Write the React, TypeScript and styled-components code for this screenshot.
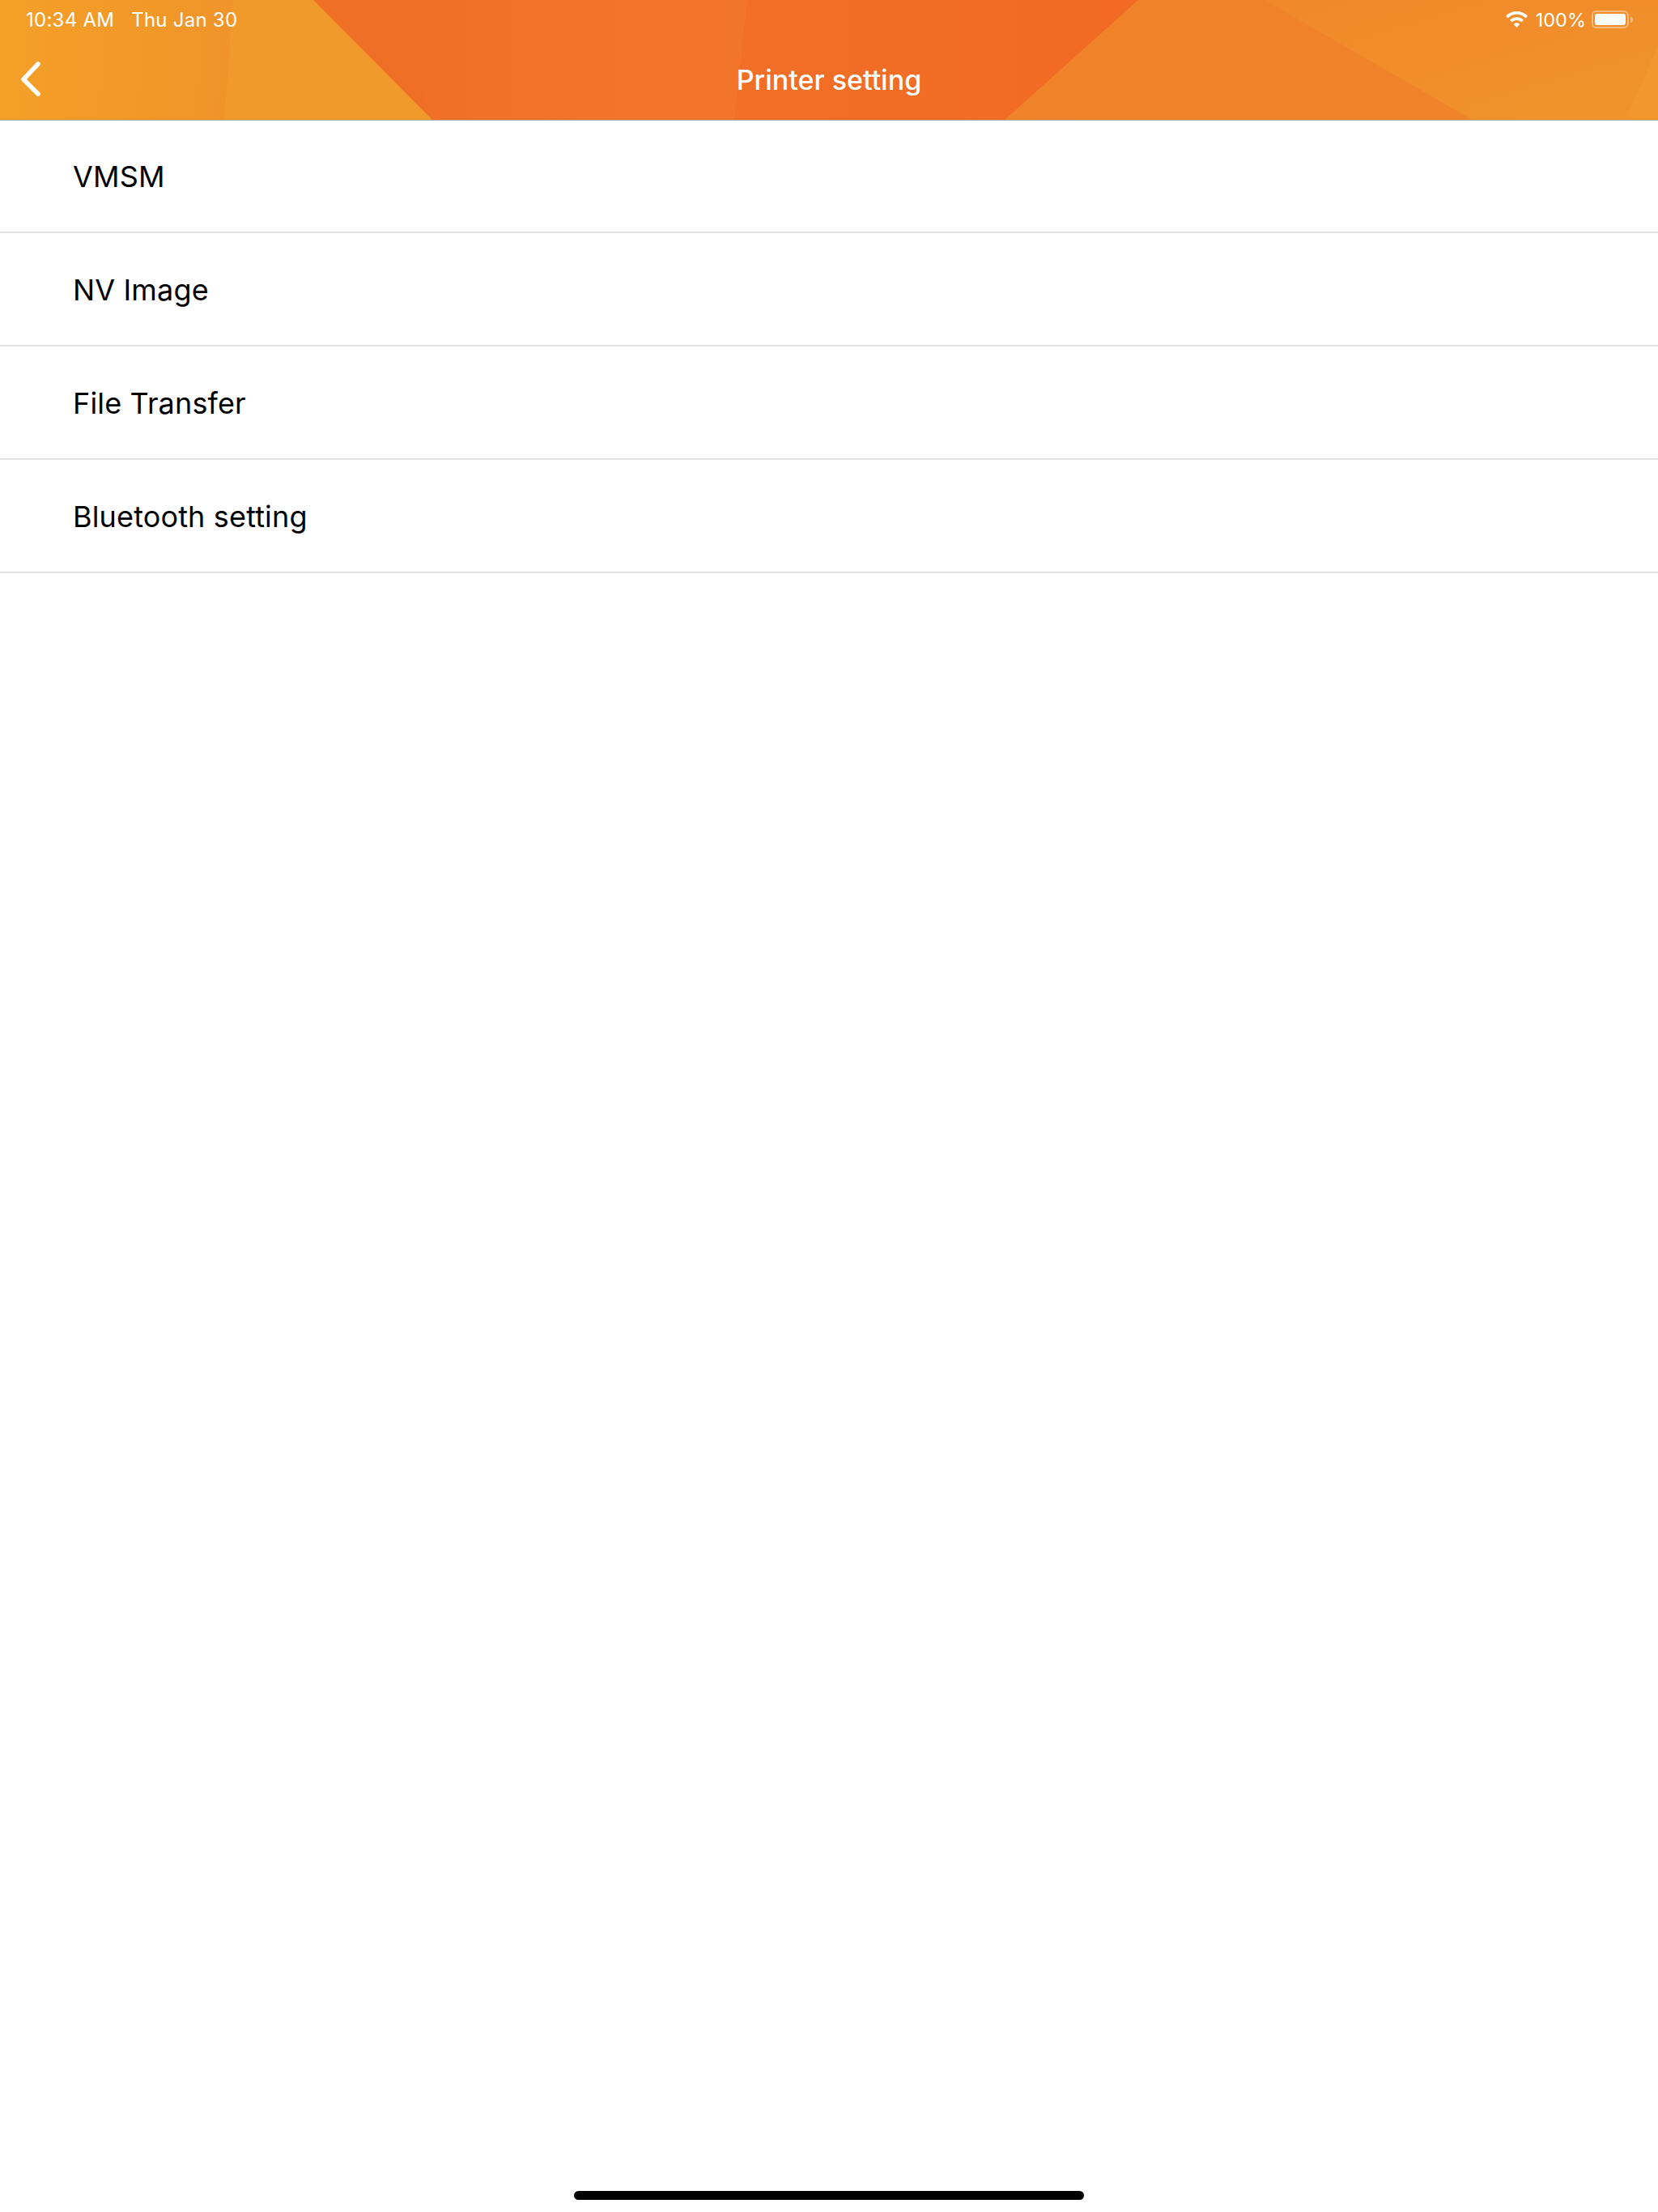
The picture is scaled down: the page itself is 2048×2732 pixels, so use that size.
import * as React from 'react'
import styled, { createGlobalStyle } from 'styled-components'

const GlobalStyle = createGlobalStyle`
  html, body {
    margin: 0;
    padding: 0;
    background: #fff;
  }
  body {
    font-family: Inter, "Liberation Sans", sans-serif;
  }
`

const items = ['VMSM', 'NV Image', 'File Transfer', 'Bluetooth setting']

const HeaderArt = () => (
  <ArtSvg viewBox="0 0 2048 148" preserveAspectRatio="none">
    <defs>
      <linearGradient id="base" gradientUnits="userSpaceOnUse" x1="0" y1="0" x2="2048" y2="148">
        <stop offset="0" stopColor="#f4a028" />
        <stop offset="0.14" stopColor="#f09429" />
        <stop offset="0.3" stopColor="#ee942a" />
        <stop offset="0.65" stopColor="#f0822a" />
        <stop offset="1" stopColor="#f0852a" />
      </linearGradient>
      <linearGradient id="mid" x1="0" y1="0" x2="1" y2="0">
        <stop offset="0" stopColor="#f06f27" />
        <stop offset="0.5" stopColor="#f16f27" />
        <stop offset="1" stopColor="#f26a24" />
      </linearGradient>
      <linearGradient id="band" gradientUnits="userSpaceOnUse" x1="480" y1="0" x2="923" y2="0">
        <stop offset="0" stopColor="#f3742a" stopOpacity="0" />
        <stop offset="0.7" stopColor="#f3742a" />
        <stop offset="1" stopColor="#f3752a" />
      </linearGradient>
      <linearGradient id="right" x1="0" y1="0" x2="1" y2="1">
        <stop offset="0" stopColor="#f0882a" />
        <stop offset="1" stopColor="#f1942b" />
      </linearGradient>
    </defs>
    <rect width="2048" height="148" fill="url(#base)" />
    <polygon points="288,0 387,0 534,148 277,148" fill="#f09a2b" />
    <polygon points="1562,0 2048,0 2048,148 1819,148" fill="url(#right)" />
    <polygon points="2048,57 2048,148 2008,148" fill="#f1972b" />
    <polygon points="387,0 1406,0 1241,148 534,148" fill="url(#mid)" />
    <polygon points="480,0 923,0 907,148 534,148" fill="url(#band)" />
  </ArtSvg>
)

const WifiIcon = () => (
  <svg width="27" height="20" viewBox="0 0 27 20" aria-hidden="true">
    <path
      fill="#fff"
      d="M13.5 0C8.4 0 3.8 2 .4 5.2c-.3.3-.3.7 0 1l1.600 1.700c.3.3.7.3 1 0C5.800 5.400 9.500 3.800 13.500 3.800s7.700 1.600 10.500 4.100c.3.3.7.3 1 0l1.600-1.700c.3-.3.3-.7 0-1C23.200 2 18.600 0 13.500 0z"
    />
    <path
      fill="#fff"
      d="M13.500 7.200c-3.100 0-5.900 1.200-8 3.100-.3.300-.3.700 0 1l1.600 1.700c.3.300.7.300 1 0 1.400-1.200 3.300-2 5.400-2s4 .8 5.400 2c.3.300.7.300 1 0l1.600-1.700c.3-.3.3-.7 0-1-2.100-1.900-4.900-3.100-8-3.100z"
    />
    <path
      fill="#fff"
      d="M13.500 14.300c-1.300 0-2.500.5-3.300 1.200-.3.300-.3.700 0 1l2.800 3c.3.300.7.300 1 0l2.800-3c.3-.3.3-.7 0-1-.8-.7-2-1.200-3.300-1.200z"
    />
  </svg>
)

const BackIcon = () => (
  <svg width="32" height="48" viewBox="0 0 32 48" aria-hidden="true">
    <path
      d="M23 5 L5 24 L23 42"
      fill="none"
      stroke="#fff"
      strokeWidth="5.500"
      strokeLinecap="round"
      strokeLinejoin="round"
    />
  </svg>
)

export default function App() {
  return (
    <>
      <GlobalStyle />
      <Page>
        <Header>
          <HeaderArt />
          <StatusBar>
            <StatusText>
              <span>10:34 AM</span>
              <span>Thu Jan 30</span>
            </StatusText>
            <StatusRight>
              <WifiIcon />
              <Percent>100%</Percent>
              <Battery>
                <BatteryFill />
              </Battery>
              <BatteryNub />
            </StatusRight>
          </StatusBar>
          <NavBar>
            <BackButton>
              <BackIcon />
            </BackButton>
            <Title>Printer setting</Title>
          </NavBar>
        </Header>
        <List>
          {items.map((item) => (
            <Row key={item}>{item}</Row>
          ))}
        </List>
        <HomeArea>
          <HomeIndicator />
        </HomeArea>
      </Page>
    </>
  )
}

const Page = styled.div`
  display: flex;
  flex-direction: column;
  width: 2048px;
  height: 2732px;
  background: #fff;
  overflow: hidden;
`

const Header = styled.header`
  position: relative;
  height: 148px;
  flex: none;
  box-shadow: 0 1px 0 #b4b4b4;
  color: #fff;
`

const ArtSvg = styled.svg`
  position: absolute;
  top: 0;
  left: 0;
  width: 100%;
  height: 100%;
`

const StatusBar = styled.div`
  position: relative;
  display: flex;
  align-items: center;
  justify-content: space-between;
  height: 48px;
  padding: 0 31px 0 32px;
`

const StatusText = styled.div`
  display: flex;
  gap: 21px;
  font-size: 24px;
  letter-spacing: 0.25px;
`

const StatusRight = styled.div`
  display: flex;
  align-items: center;
`

const Percent = styled.span`
  margin: 0 7px 0 10px;
  font-size: 23.5px;
`

const Battery = styled.div`
  box-sizing: border-box;
  width: 46px;
  height: 22px;
  padding: 2px;
  border: 2px solid rgba(255, 255, 255, 0.4);
  border-radius: 6px;
`

const BatteryFill = styled.div`
  width: 100%;
  height: 100%;
  background: #fff;
  border-radius: 3px;
`

const BatteryNub = styled.div`
  width: 3px;
  height: 7px;
  margin-left: 2px;
  background: rgba(255, 255, 255, 0.4);
  border-radius: 0 3px 3px 0;
`

const NavBar = styled.div`
  position: relative;
  display: flex;
  align-items: center;
  justify-content: center;
  height: 100px;
`

const BackButton = styled.div`
  position: absolute;
  left: 24px;
  top: 26px;
  display: flex;
`

const Title = styled.div`
  font-size: 34px;
  font-weight: 500;
  letter-spacing: 0;
`

const List = styled.div`
  display: flex;
  flex-direction: column;
`

const Row = styled.div`
  box-sizing: border-box;
  display: flex;
  align-items: center;
  height: 140px;
  padding: 2px 0 0 90px;
  border-bottom: 2px solid #e3e3e3;
  font-size: 36px;
  letter-spacing: 0.15px;
  color: #000;
`

const HomeArea = styled.div`
  flex: 1;
  display: flex;
  justify-content: center;
  align-items: flex-end;
  padding-bottom: 15px;
`

const HomeIndicator = styled.div`
  width: 630px;
  height: 11px;
  background: #000;
  border-radius: 6px;
`
